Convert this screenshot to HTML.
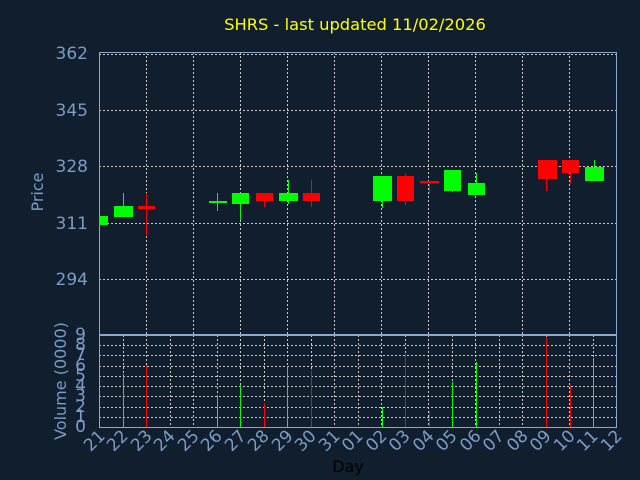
<!DOCTYPE html>
<html><head><meta charset="utf-8"><style>
html,body{margin:0;padding:0;background:#111e2e;}
svg{display:block}
text{font-family:"DejaVu Sans","Liberation Sans",sans-serif;}
</style></head><body>
<svg width="640" height="480" viewBox="0 0 640 480" xmlns="http://www.w3.org/2000/svg">
<rect width="640" height="480" fill="#111e2e"/>
<text x="355" y="30" fill="#ffff00" font-size="16.3" text-anchor="middle">SHRS - last updated 11/02/2026</text>
<g stroke="#c8c8c8" stroke-width="1" stroke-dasharray="2,2">
<line x1="99" y1="54.5" x2="617" y2="54.5"/>
<line x1="99" y1="110.5" x2="617" y2="110.5"/>
<line x1="99" y1="166.5" x2="617" y2="166.5"/>
<line x1="99" y1="223.5" x2="617" y2="223.5"/>
<line x1="99" y1="279.5" x2="617" y2="279.5"/>
<line x1="146.5" y1="52" x2="146.5" y2="334"/>
<line x1="193.5" y1="52" x2="193.5" y2="334"/>
<line x1="240.5" y1="52" x2="240.5" y2="334"/>
<line x1="287.5" y1="52" x2="287.5" y2="334"/>
<line x1="334.5" y1="52" x2="334.5" y2="334"/>
<line x1="381.5" y1="52" x2="381.5" y2="334"/>
<line x1="428.5" y1="52" x2="428.5" y2="334"/>
<line x1="475.5" y1="52" x2="475.5" y2="334"/>
<line x1="522.5" y1="52" x2="522.5" y2="334"/>
<line x1="569.5" y1="52" x2="569.5" y2="334"/>
<line x1="99" y1="345.5" x2="617" y2="345.5"/>
<line x1="99" y1="355.5" x2="617" y2="355.5"/>
<line x1="99" y1="366.5" x2="617" y2="366.5"/>
<line x1="99" y1="376.5" x2="617" y2="376.5"/>
<line x1="99" y1="386.5" x2="617" y2="386.5"/>
<line x1="99" y1="396.5" x2="617" y2="396.5"/>
<line x1="99" y1="407.5" x2="617" y2="407.5"/>
<line x1="99" y1="417.5" x2="617" y2="417.5"/>
<line x1="123.5" y1="335" x2="123.5" y2="427"/><line x1="146.5" y1="335" x2="146.5" y2="427"/>
<line x1="170.5" y1="335" x2="170.5" y2="427"/><line x1="193.5" y1="335" x2="193.5" y2="427"/>
<line x1="217.5" y1="335" x2="217.5" y2="427"/><line x1="240.5" y1="335" x2="240.5" y2="427"/>
<line x1="264.5" y1="335" x2="264.5" y2="427"/><line x1="287.5" y1="335" x2="287.5" y2="427"/>
<line x1="311.5" y1="335" x2="311.5" y2="427"/><line x1="334.5" y1="335" x2="334.5" y2="427"/>
<line x1="358.5" y1="335" x2="358.5" y2="427"/><line x1="381.5" y1="335" x2="381.5" y2="427"/>
<line x1="405.5" y1="335" x2="405.5" y2="427"/><line x1="428.5" y1="335" x2="428.5" y2="427"/>
<line x1="452.5" y1="335" x2="452.5" y2="427"/><line x1="475.5" y1="335" x2="475.5" y2="427"/>
<line x1="499.5" y1="335" x2="499.5" y2="427"/><line x1="522.5" y1="335" x2="522.5" y2="427"/>
<line x1="546.5" y1="335" x2="546.5" y2="427"/><line x1="569.5" y1="335" x2="569.5" y2="427"/>
<line x1="593.5" y1="335" x2="593.5" y2="427"/>
</g>
<g stroke="#8aa8d0" fill="none" stroke-width="1">
<rect x="99.5" y="52.5" width="517" height="282"/>
<rect x="99.5" y="335.5" width="517" height="92"/>
</g>
<g>
<rect x="99" y="216" width="9" height="9" fill="#00ff00"/>
<rect x="123" y="193" width="1" height="13" fill="#00ff00"/><rect x="114" y="206" width="19" height="11" fill="#00ff00"/>
<rect x="146" y="193" width="1" height="42" fill="#ff0000"/><rect x="138" y="206" width="17" height="3" fill="#ff0000"/>
<rect x="217" y="193" width="1" height="18" fill="#00ff00"/><rect x="209" y="201" width="18" height="2" fill="#00ff00"/>
<rect x="240" y="193" width="1" height="27" fill="#00ff00"/><rect x="232" y="193" width="17" height="11" fill="#00ff00"/>
<rect x="264" y="193" width="1" height="14" fill="#ff0000"/><rect x="256" y="193" width="17" height="8" fill="#ff0000"/>
<rect x="288" y="180" width="1" height="24" fill="#00ff00"/><rect x="279" y="193" width="19" height="8" fill="#00ff00"/>
<rect x="311" y="180" width="1" height="27" fill="#ff0000"/><rect x="303" y="193" width="17" height="8" fill="#ff0000"/>
<rect x="382" y="176" width="1" height="32" fill="#00ff00"/><rect x="373" y="176" width="19" height="25" fill="#00ff00"/>
<rect x="405" y="173" width="1" height="32" fill="#ff0000"/><rect x="397" y="176" width="17" height="25" fill="#ff0000"/>
<rect x="429" y="181" width="1" height="12" fill="#ff0000"/><rect x="420" y="181" width="19" height="2" fill="#ff0000"/>
<rect x="452" y="170" width="1" height="22" fill="#00ff00"/><rect x="444" y="170" width="17" height="21" fill="#00ff00"/>
<rect x="476" y="173" width="1" height="22" fill="#00ff00"/><rect x="468" y="183" width="17" height="12" fill="#00ff00"/>
<rect x="546" y="160" width="1" height="31" fill="#ff0000"/><rect x="538" y="160" width="19" height="19" fill="#ff0000"/>
<rect x="570" y="160" width="1" height="24" fill="#ff0000"/><rect x="562" y="160" width="17" height="13" fill="#ff0000"/>
<rect x="594" y="160" width="1" height="21" fill="#00ff00"/><rect x="585" y="167" width="19" height="14" fill="#00ff00"/>
</g>
<g>
<rect x="123" y="374" width="1" height="53" fill="#00ff00"/>
<rect x="146" y="365" width="1" height="62" fill="#ff0000"/>
<rect x="217" y="395" width="1" height="32" fill="#00ff00"/>
<rect x="240" y="385" width="1" height="42" fill="#00ff00"/>
<rect x="264" y="403" width="1" height="24" fill="#ff0000"/>
<rect x="287" y="366" width="1" height="61" fill="#00ff00"/>
<rect x="311" y="370" width="1" height="57" fill="#ff0000"/>
<rect x="382" y="407" width="1" height="20" fill="#00ff00"/>
<rect x="405" y="354" width="1" height="73" fill="#ff0000"/>
<rect x="429" y="411" width="1" height="16" fill="#ff0000"/>
<rect x="452" y="382" width="1" height="45" fill="#00ff00"/>
<rect x="476" y="362" width="1" height="65" fill="#00ff00"/>
<rect x="546" y="338" width="1" height="89" fill="#ff0000"/>
<rect x="570" y="385" width="1" height="42" fill="#ff0000"/>
<rect x="593" y="358" width="1" height="69" fill="#00ff00"/>
</g>
<g fill="#7a9cc6" font-size="17" text-anchor="end">
<text x="88" y="59">362</text>
<text x="88" y="116">345</text>
<text x="88" y="172">328</text>
<text x="88" y="229">311</text>
<text x="88" y="285">294</text>
</g>
<text transform="translate(43,192) rotate(-90)" fill="#7a9cc6" font-size="16" text-anchor="middle">Price</text>
<g fill="#7a9cc6" font-size="17" text-anchor="end">
<text x="86" y="432">0</text><text x="86" y="422">1</text><text x="86" y="412">2</text>
<text x="86" y="401">3</text><text x="86" y="391">4</text><text x="86" y="381">5</text>
<text x="86" y="371">6</text><text x="86" y="360">7</text><text x="86" y="350">8</text>
<text x="86" y="340">9</text>
</g>
<text transform="translate(66,381) rotate(-90)" fill="#7a9cc6" font-size="16" text-anchor="middle">Volume (0000)</text>
<g fill="#7a9cc6" font-size="17" text-anchor="end">
<text transform="translate(106,437) rotate(-45)">21</text>
<text transform="translate(129,437) rotate(-45)">22</text>
<text transform="translate(153,437) rotate(-45)">23</text>
<text transform="translate(176,437) rotate(-45)">24</text>
<text transform="translate(200,437) rotate(-45)">25</text>
<text transform="translate(223,437) rotate(-45)">26</text>
<text transform="translate(247,437) rotate(-45)">27</text>
<text transform="translate(270,437) rotate(-45)">28</text>
<text transform="translate(294,437) rotate(-45)">29</text>
<text transform="translate(317,437) rotate(-45)">30</text>
<text transform="translate(341,437) rotate(-45)">31</text>
<text transform="translate(364,437) rotate(-45)">01</text>
<text transform="translate(388,437) rotate(-45)">02</text>
<text transform="translate(411,437) rotate(-45)">03</text>
<text transform="translate(435,437) rotate(-45)">04</text>
<text transform="translate(458,437) rotate(-45)">05</text>
<text transform="translate(482,437) rotate(-45)">06</text>
<text transform="translate(505,437) rotate(-45)">07</text>
<text transform="translate(529,437) rotate(-45)">08</text>
<text transform="translate(552,437) rotate(-45)">09</text>
<text transform="translate(576,437) rotate(-45)">10</text>
<text transform="translate(599,437) rotate(-45)">11</text>
<text transform="translate(623,437) rotate(-45)">12</text>
</g>
<text x="348" y="472" fill="#000000" font-size="16" text-anchor="middle">Day</text>
</svg>
</body></html>
